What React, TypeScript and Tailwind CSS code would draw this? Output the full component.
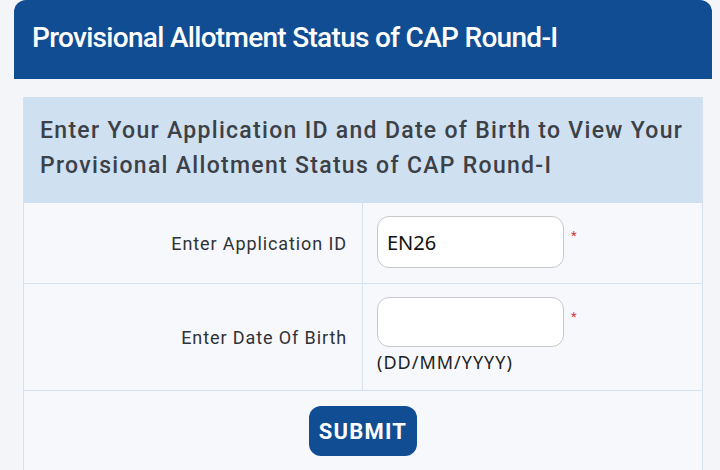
import React from 'react';

// Provisional allotment status lookup form

const roboto = { fontFamily: 'Roboto, "Noto Sans", sans-serif' };
const noto = { fontFamily: '"Noto Sans", sans-serif' };

function RequiredMark() {
  return <span className="ml-[7px] mt-[13px] self-start text-[13px] leading-none text-[#d03a3a]">*</span>;
}

export default function App() {
  return (
    <div className="min-h-[470px] w-[720px] overflow-hidden bg-[#f3f5f8]" style={roboto}>
      {/* Header bar */}
      <div className="ml-[14px] mr-[8px] flex h-[79px] items-start rounded-t-[12px] bg-[#114d93] pl-[18px] pt-[21px]">
        <h1 className="text-[28px] font-medium leading-[34px] tracking-[-0.7px] text-white">
          Provisional Allotment Status of CAP Round-I
        </h1>
      </div>

      {/* Form panel */}
      <div className="ml-[23px] mr-[17px] mt-[18px] border-x border-[#d5e1ee]">
        <div className="h-[106px] bg-[#cfe0f1] px-[16px] pt-[16px]">
          <p className="text-[23px] font-medium leading-[35px] tracking-[1.3px] text-[#3c4047]">
            Enter Your Application ID and Date of Birth to View Your Provisional Allotment Status of CAP Round-I
          </p>
        </div>

        {/* Application ID row */}
        <div className="grid grid-cols-[339px_1fr] border-b border-[#d5e1ee] bg-[#f8f9fb]/80">
          <div className="flex h-[80px] items-center justify-end border-r border-[#d5e1ee] pr-[15px]">
            <span className="text-[18px] tracking-[0.9px] text-[#2f3237]">Enter Application ID</span>
          </div>
          <div className="flex items-start pl-[14px] pt-[13px]">
            <input
              defaultValue="EN26"
              className="h-[52px] w-[187px] rounded-[12px] border border-[#c7c9cc] bg-white px-[9px] text-[20px] text-[#111] outline-none"
              style={noto}
            />
            <RequiredMark />
          </div>
        </div>

        {/* Date of birth row */}
        <div className="grid grid-cols-[339px_1fr] border-b border-[#d5e1ee] bg-[#f8f9fb]/80">
          <div className="flex h-[106px] items-center justify-end border-r border-[#d5e1ee] pr-[15px]">
            <span className="text-[18px] tracking-[0.9px] text-[#2f3237]">Enter Date Of Birth</span>
          </div>
          <div className="flex flex-col items-start pl-[14px] pt-[13px]">
            <div className="flex">
              <input
                className="h-[50px] w-[187px] rounded-[12px] border border-[#c7c9cc] bg-white px-[9px] text-[20px] outline-none"
                style={noto}
              />
              <RequiredMark />
            </div>
            <span className="mt-[2px] text-[18px] leading-[26px] tracking-[1px] text-[#222]" style={noto}>
              (DD/MM/YYYY)
            </span>
          </div>
        </div>

        {/* Submit row */}
        <div className="flex h-[90px] justify-center bg-[#f8f9fb]/80 pt-[15px]">
          <button className="h-[50px] w-[108px] rounded-[12px] bg-[#114d93] text-[22px] font-bold tracking-[1.2px] text-white">
            SUBMIT
          </button>
        </div>
      </div>
    </div>
  );
}
